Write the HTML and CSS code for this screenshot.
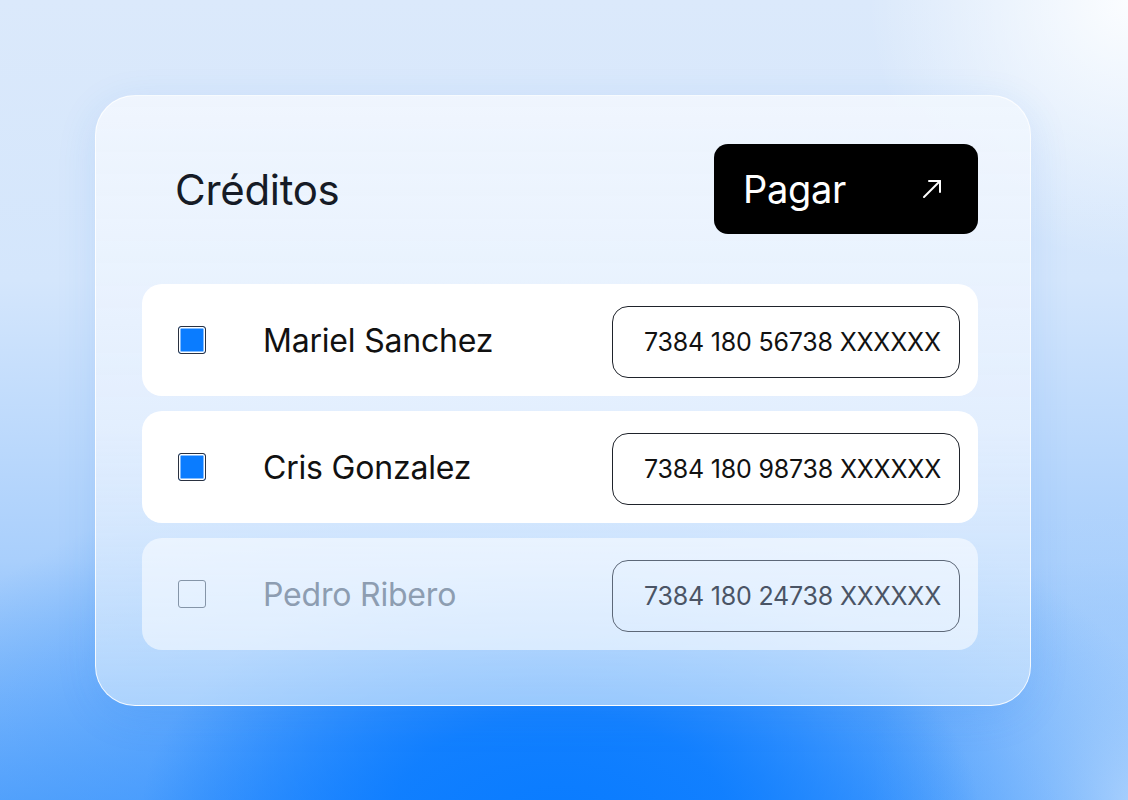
FILE: index.html
```html
<!DOCTYPE html>
<html lang="es">
<head>
<meta charset="utf-8">
<title>Créditos</title>
<link rel="stylesheet" href="styles.css">
</head>
<body>
<div class="page">
  <section class="card">
    <header class="card-header">
      <h1 class="title">Créditos</h1>
      <button class="pay-btn">
        <span class="pay-label">Pagar</span>
        <svg class="pay-icon" width="22" height="22" viewBox="0 0 22 22" fill="none" stroke="#fff" stroke-width="2" stroke-linecap="round" stroke-linejoin="round">
          <path d="M3 19 L19 3"/>
          <path d="M8 3 H19 V14"/>
        </svg>
      </button>
    </header>
    <div class="rows">
      <div class="row">
        <span class="check checked"></span>
        <span class="name">Mariel Sanchez</span>
        <span class="account">7384 180 56738 XXXXXX</span>
      </div>
      <div class="row">
        <span class="check checked"></span>
        <span class="name">Cris Gonzalez</span>
        <span class="account">7384 180 98738 XXXXXX</span>
      </div>
      <div class="row row-muted">
        <span class="check"></span>
        <span class="name">Pedro Ribero</span>
        <span class="account">7384 180 24738 XXXXXX</span>
      </div>
    </div>
  </section>
</div>
</body>
</html>
```

FILE: styles.css
```css
* { box-sizing: border-box; }
html, body { margin: 0; padding: 0; }
body {
  width: 1128px;
  height: 800px;
  overflow: hidden;
  font-family: "Inter", "Noto Sans", sans-serif;
}
.page {
  width: 1128px;
  height: 800px;
  padding: 95px 97px 94px 95px;
  background:
    radial-gradient(ellipse 420px 260px at 560px 820px, #0a7cff 0%, rgba(10,124,255,0.85) 40%, rgba(10,124,255,0) 100%),
    radial-gradient(ellipse 700px 420px at 520px 860px, rgba(30,130,255,0.9) 0%, rgba(60,150,255,0.5) 55%, rgba(80,160,255,0) 100%),
    radial-gradient(ellipse 260px 260px at 1128px 0px, #fbfdff 0%, rgba(251,253,255,0) 100%),
    radial-gradient(ellipse 260px 300px at 1128px 800px, #b4d6fd 0%, rgba(180,214,253,0) 100%),
    linear-gradient(180deg, #dbe9fb 0%, #d4e6fc 35%, #a9cffc 70%, #5aa5fb 100%);
}
.card {
  width: 936px;
  height: 611px;
  border-radius: 40px;
  border: 1.5px solid rgba(255,255,255,0.85);
  background: linear-gradient(180deg, rgba(240,246,254,0.96) 0%, rgba(230,240,254,0.9) 55%, rgba(196,224,253,0.75) 100%);
  box-shadow: 0 10px 40px rgba(40,120,230,0.12);
  padding: 48px 52px 55px 46px;
  display: flex;
  flex-direction: column;
  gap: 50px;
}
.card-header {
  display: flex;
  align-items: center;
  justify-content: space-between;
  height: 90px;
}
.title {
  margin: 0 0 0 33px;
  font-size: 42px;
  font-weight: 400;
  color: #161b26;
  letter-spacing: -0.3px;
}
.pay-btn {
  width: 264px;
  height: 90px;
  border: none;
  border-radius: 14px;
  background: #000;
  color: #fff;
  display: flex;
  align-items: center;
  justify-content: space-between;
  padding: 0 35px 0 29px;
  font-family: inherit;
  cursor: pointer;
}
.pay-label {
  font-size: 38px;
  font-weight: 400;
  letter-spacing: -0.3px;
}
.pay-icon { display: block; }
.rows {
  display: flex;
  flex-direction: column;
  gap: 15px;
}
.row {
  height: 112px;
  border-radius: 20px;
  background: #fff;
  display: flex;
  align-items: center;
  padding: 0 18px 0 36px;
}
.row-muted {
  background: rgba(255,255,255,0.55);
}
.check {
  width: 28px;
  height: 28px;
  flex: 0 0 28px;
  border-radius: 3px;
  border: 1.5px solid #8595a8;
  background: transparent;
}
.check.checked {
  background: #0a7cff;
  border: 1.5px solid #2a3140;
  box-shadow: inset 0 0 0 1.5px #fff;
}
.name {
  margin-left: 57px;
  font-size: 32px;
  color: #111;
  letter-spacing: -0.2px;
  flex: 1;
}
.row-muted .name { color: #8d9db1; }
.account {
  width: 348px;
  height: 72px;
  border: 1.5px solid #1f232b;
  border-radius: 16px;
  display: flex;
  align-items: center;
  padding-left: 31px;
  font-size: 25px;
  color: #111;
  letter-spacing: -0.2px;
  white-space: nowrap;
  margin-top: 4px;
}
.row-muted .account {
  border-color: #5d6878;
  color: #4a5465;
}
```
